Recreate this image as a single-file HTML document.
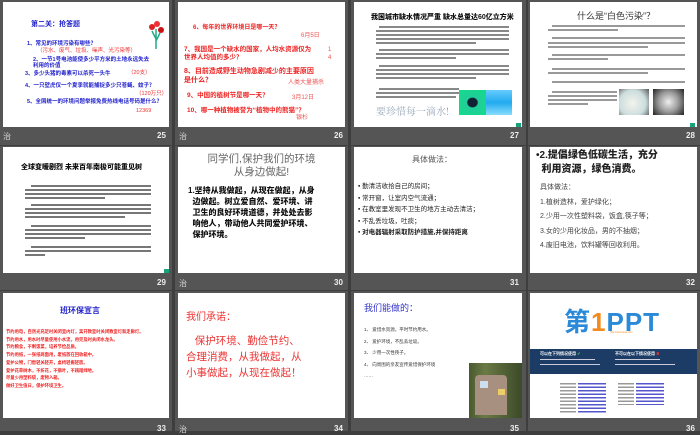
<!DOCTYPE html>
<html><head><meta charset="utf-8"><style>
*{margin:0;padding:0;box-sizing:border-box}
body{width:700px;height:431px;background:#3e3e3e;position:relative;overflow:hidden;font-family:"Liberation Sans","Noto Sans CJK SC",sans-serif}
.cell{position:absolute;background:#555}
.s{position:absolute;background:#fff;overflow:hidden}
.n{position:absolute;color:#eee;font-size:8px;font-weight:bold}
.z{position:absolute;color:#ddd;font-size:8px}
.a{position:absolute;white-space:nowrap}
.g{position:absolute;background:#1aa37a;width:5px;height:4px}
.bl{position:absolute;height:2px;background:#888}
.bd{font-family:"Liberation Sans","Noto Sans CJK SC",sans-serif;font-weight:900}
</style></head><body>
<div class="cell" style="left:0;top:0;width:172px;height:145px"></div>
<div class="cell" style="left:175px;top:0;width:173px;height:145px"></div>
<div class="cell" style="left:351px;top:0;width:175px;height:145px"></div>
<div class="cell" style="left:528px;top:0;width:172px;height:145px"></div>
<div class="cell" style="left:0;top:146px;width:172px;height:144px"></div>
<div class="cell" style="left:175px;top:146px;width:173px;height:144px"></div>
<div class="cell" style="left:351px;top:146px;width:175px;height:144px"></div>
<div class="cell" style="left:528px;top:146px;width:172px;height:144px"></div>
<div class="cell" style="left:0;top:291px;width:172px;height:140px"></div>
<div class="cell" style="left:175px;top:291px;width:173px;height:140px"></div>
<div class="cell" style="left:351px;top:291px;width:175px;height:140px"></div>
<div class="cell" style="left:528px;top:291px;width:172px;height:140px"></div>

<!-- 25 -->
<div class="s" style="left:3px;top:2px;width:166px;height:125px">
<div class="a" style="left:28px;top:17px;font-size:7px;color:#22c;font-weight:bold">第二关：抢答题</div>
<div class="a" style="left:145px;top:17px;width:14px;height:30px">
<svg width="16" height="32"><path d="M8 30 L8 10 M8 20 L4 12 M8 22 L12 14" stroke="#2a8" stroke-width="1.5" fill="none"/><circle cx="4" cy="8" r="3" fill="#d22"/><circle cx="9" cy="5" r="3" fill="#e33"/><circle cx="13" cy="11" r="3" fill="#c11"/></svg></div>
<div class="a" style="left:24px;top:37px;font-size:5.5px;color:#22c;font-weight:bold">1、常见的环境污染有哪些？</div>
<div class="a" style="left:34px;top:44px;font-size:5.5px;color:#e33">（污水、废气、垃圾、噪声、光污染等）</div>
<div class="a" style="left:30px;top:55px;font-size:5.5px;color:#22c;font-weight:bold;line-height:6px">2、一节1号电池能使多少平方米的土地永远失去<br>利用的价值</div>
<div class="a" style="left:22px;top:67px;font-size:5.5px;color:#22c;font-weight:bold">3、多少头猪的毒素可以杀死一头牛</div>
<div class="a" style="left:125px;top:66px;font-size:5.5px;color:#e33">（20支）</div>
<div class="a" style="left:22px;top:79px;font-size:5.5px;color:#22c;font-weight:bold">4、一只壁虎仅一个夏季就能捕捉多少只苍蝇、蚊子？</div>
<div class="a" style="left:133px;top:87px;font-size:5.5px;color:#e33">（120万只）</div>
<div class="a" style="left:24px;top:95px;font-size:5.5px;color:#22c;font-weight:bold">5、全国统一的环境问题举报免费热线电话号码是什么？</div>
<div class="a" style="left:133px;top:106px;font-size:5.5px;color:#e33">12369</div>
</div>
<div class="z" style="left:3px;top:131px">治</div><div class="n" style="left:157px;top:131px">25</div>

<!-- 26 -->
<div class="s" style="left:178px;top:2px;width:167px;height:125px">
<div class="a" style="left:15px;top:20px;font-size:6px;color:#e22;font-weight:bold">6、每年的世界环境日是哪一天？</div>
<div class="a" style="left:123px;top:28px;font-size:6px;color:#e55">6月5日</div>
<div class="a" style="left:6px;top:44px;font-size:6.5px;color:#e22;font-weight:bold;line-height:8px">7、我国是一个缺水的国家，人均水资源仅为<br>世界人均值的多少？</div>
<div class="a" style="left:150px;top:44px;font-size:6px;color:#e55;line-height:8px">1<br>4</div>
<div class="a" style="left:6px;top:65px;font-size:7px;color:#e22;font-weight:bold;line-height:9px">8、目前造成野生动物急剧减少的主要原因<br>是什么？</div>
<div class="a" style="left:110px;top:75px;font-size:6px;color:#e55">人类大量捕杀</div>
<div class="a" style="left:9px;top:87px;font-size:6.5px;color:#e22;font-weight:bold">9、中国的植树节是哪一天？</div>
<div class="a" style="left:114px;top:90px;font-size:6px;color:#e55">3月12日</div>
<div class="a" style="left:9px;top:102px;font-size:6.5px;color:#e22;font-weight:bold">10、哪一种植物被誉为“植物中的熊猫”？</div>
<div class="a" style="left:118px;top:110px;font-size:6px;color:#e55">银杉</div>
</div>
<div class="z" style="left:179px;top:131px">治</div><div class="n" style="left:334px;top:131px">26</div>

<!-- 27 -->
<div class="s" style="left:354px;top:2px;width:168px;height:125px">
<div class="a bd" style="left:17px;top:10px;font-size:7px;color:#111">我国城市缺水情况严重 缺水总量达60亿立方米</div>
<div class="bl" style="left:25px;top:24px;width:130px"></div><div class="bl" style="left:22px;top:28px;width:133px"></div><div class="bl" style="left:22px;top:32px;width:133px"></div><div class="bl" style="left:22px;top:36px;width:133px"></div><div class="bl" style="left:22px;top:40px;width:100px"></div>
<div class="bl" style="left:25px;top:47px;width:130px"></div><div class="bl" style="left:22px;top:51px;width:133px"></div><div class="bl" style="left:22px;top:55px;width:80px"></div>
<div class="bl" style="left:25px;top:63px;width:130px"></div><div class="bl" style="left:22px;top:67px;width:133px"></div><div class="bl" style="left:22px;top:71px;width:133px"></div><div class="bl" style="left:22px;top:75px;width:100px"></div>
<div class="bl" style="left:25px;top:86px;width:80px"></div><div class="bl" style="left:22px;top:90px;width:83px"></div><div class="bl" style="left:22px;top:94px;width:80px"></div>
<div style="position:absolute;left:105px;top:88px;width:27px;height:25px;background:radial-gradient(ellipse at 50% 50%,#123 0,#123 25%,#2c9 30%,#1d8 100%)"></div>
<div style="position:absolute;left:132px;top:88px;width:26px;height:25px;background:linear-gradient(#6cf,#2ae 50%,#8df)"></div>
<div class="a" style="left:22px;top:101px;font-size:10px;color:#9ab;font-family:'Noto Serif CJK SC',serif">要珍惜每一滴水!</div>
<div class="g" style="left:162px;top:121px"></div>
</div>
<div class="n" style="left:510px;top:131px">27</div>

<!-- 28 -->
<div class="s" style="left:530px;top:2px;width:167px;height:125px">
<div class="a" style="left:47px;top:7px;font-size:9px;color:#333">什么是“白色污染”？</div>
<div class="bl" style="left:22px;top:23px;width:133px;background:#999"></div><div class="bl" style="left:18px;top:27px;width:70px;background:#999"></div>
<div class="bl" style="left:22px;top:35px;width:133px;background:#999"></div><div class="bl" style="left:18px;top:40px;width:137px;background:#999"></div><div class="bl" style="left:18px;top:44px;width:100px;background:#999"></div>
<div class="bl" style="left:22px;top:52px;width:133px;background:#999"></div><div class="bl" style="left:18px;top:56px;width:60px;background:#999"></div>
<div class="bl" style="left:22px;top:66px;width:133px;background:#999"></div><div class="bl" style="left:18px;top:70px;width:100px;background:#999"></div>
<div class="bl" style="left:22px;top:79px;width:133px;background:#999"></div>
<div class="bl" style="left:22px;top:89px;width:65px;background:#999"></div><div class="bl" style="left:18px;top:93px;width:69px;background:#999"></div><div class="bl" style="left:18px;top:97px;width:69px;background:#999"></div><div class="bl" style="left:18px;top:101px;width:40px;background:#999"></div>
<div style="position:absolute;left:89px;top:87px;width:30px;height:26px;background:radial-gradient(circle at 45% 55%,#f4f4ee,#cdd 60%,#555)"></div>
<div style="position:absolute;left:123px;top:87px;width:31px;height:26px;background:radial-gradient(circle at 50% 50%,#eee,#999 50%,#222)"></div>
<div class="g" style="left:160px;top:121px"></div>
</div>
<div class="n" style="left:686px;top:131px">28</div>

<!-- 29 -->
<div class="s" style="left:3px;top:147px;width:166px;height:126px">
<div class="a bd" style="left:18px;top:15px;font-size:7px;color:#111">全球变暖剧烈 未来百年南极可能重见树</div>
<div class="bl" style="left:28px;top:38px;width:120px;background:#777"></div><div class="bl" style="left:22px;top:42px;width:126px;background:#777"></div><div class="bl" style="left:22px;top:46px;width:126px;background:#777"></div><div class="bl" style="left:22px;top:50px;width:80px;background:#777"></div>
<div class="bl" style="left:28px;top:57px;width:120px;background:#777"></div><div class="bl" style="left:22px;top:61px;width:126px;background:#777"></div><div class="bl" style="left:22px;top:65px;width:126px;background:#777"></div><div class="bl" style="left:22px;top:69px;width:100px;background:#777"></div>
<div class="bl" style="left:28px;top:78px;width:120px;background:#777"></div><div class="bl" style="left:22px;top:82px;width:126px;background:#777"></div><div class="bl" style="left:22px;top:86px;width:126px;background:#777"></div><div class="bl" style="left:22px;top:90px;width:60px;background:#777"></div>
<div class="bl" style="left:28px;top:99px;width:120px;background:#777"></div><div class="bl" style="left:22px;top:103px;width:126px;background:#777"></div><div class="bl" style="left:22px;top:107px;width:20px;background:#777"></div>
<div class="g" style="left:161px;top:122px"></div>
</div>
<div class="n" style="left:157px;top:278px">29</div>

<!-- 30 -->
<div class="s" style="left:178px;top:147px;width:167px;height:126px">
<div class="a" style="left:26px;top:6px;font-size:10.5px;color:#666;text-align:center;line-height:13px;width:115px">同学们,保护我们的环境<br>从身边做起!</div>
<div class="a bd" style="left:10px;top:38px;font-size:8px;color:#111;line-height:11px">1.坚持从我做起，从现在做起，从身<br>&nbsp;&nbsp;边做起。树立爱自然、爱环境、讲<br>&nbsp;&nbsp;卫生的良好环境道德，并处处去影<br>&nbsp;&nbsp;响他人，带动他人共同爱护环境、<br>&nbsp;&nbsp;保护环境。</div>
</div>
<div class="z" style="left:179px;top:278px">治</div><div class="n" style="left:334px;top:278px">30</div>

<!-- 31 -->
<div class="s" style="left:354px;top:147px;width:168px;height:126px">
<div class="a" style="left:58px;top:7px;font-size:8px;color:#555">具体做法：</div>
<div class="a" style="left:4px;top:34px;font-size:6.5px;color:#222;line-height:11.5px">▪ 勤清洁收拾自己的房间；<br>▪ 常开窗，让室内空气流通；<br>▪ 在教室里发现不卫生的地方主动去清洁；<br>▪ 不乱丢垃圾，吐痰；<br><b>▪ 对电器辐射采取防护措施,并保持距离</b></div>
</div>
<div class="n" style="left:510px;top:278px">31</div>

<!-- 32 -->
<div class="s" style="left:530px;top:147px;width:167px;height:126px">
<div class="a bd" style="left:6px;top:2px;font-size:10px;color:#222;line-height:14px">•2.提倡绿色低碳生活，充分<br>&nbsp;&nbsp;利用资源，绿色消费。</div>
<div class="a" style="left:10px;top:34px;font-size:7px;color:#444;line-height:14.5px">具体做法：<br>1.植树造林，爱护绿化；<br>2.少用一次性塑料袋，饭盒,筷子等；<br>3.女的少用化妆品，男的不抽烟；<br>4.废旧电池，饮料罐等回收利用。</div>
</div>
<div class="n" style="left:686px;top:278px">32</div>

<!-- 33 -->
<div class="s" style="left:3px;top:293px;width:166px;height:125px">
<div class="a" style="left:57px;top:12px;font-size:8px;color:#22c;font-weight:bold">班环保宣言</div>
<div class="a" style="left:3px;top:35px;font-size:4.3px;color:#e22;font-weight:bold;line-height:7.7px">节约用电，自然光充足时关闭室内灯，离开教室时关闭教室灯和走廊灯。<br>节约用水，用水时尽量使用小水流，用完及时关闭水龙头。<br>节约粮食，不剩饭菜，培养节俭品质。<br>节约用纸，一张纸两面用，废纸放在回收箱中。<br>爱护公物，门窗轻关轻开，桌椅轻搬轻放。<br>爱护花草树木，不折花，不摘叶，不践踏绿地。<br>尽量少用塑料袋，废物入箱。<br>做好卫生值日，保护环境卫生。</div>
</div>
<div class="n" style="left:157px;top:424px">33</div>

<!-- 34 -->
<div class="s" style="left:178px;top:293px;width:167px;height:125px">
<div class="a" style="left:8px;top:15px;font-size:10px;color:#e33">我们承诺：</div>
<div class="a" style="left:8px;top:40px;font-size:10.5px;color:#e33;line-height:16px">&nbsp;&nbsp;&nbsp;保护环境、勤俭节约、<br>合理消费，从我做起，从<br>小事做起，从现在做起！</div>
</div>
<div class="z" style="left:179px;top:424px">治</div><div class="n" style="left:334px;top:424px">34</div>

<!-- 35 -->
<div class="s" style="left:354px;top:293px;width:168px;height:125px">
<div class="a" style="left:10px;top:8px;font-size:9px;color:#33c">我们能做的：</div>
<div class="a" style="left:10px;top:31px;font-size:4.5px;color:#333;line-height:11.5px">1、 爱惜水资源，平时节约用水。<br>2、 爱护环境，不乱丢垃圾。<br>3、 少用一次性筷子。<br>4、 向周围的亲友宣传爱惜保护环境<br>……</div>
<div style="position:absolute;left:115px;top:70px;width:53px;height:55px;background:linear-gradient(90deg,#4a5a30,#6b7a45 30%,#3b4a28)"></div>
<div style="position:absolute;left:121px;top:82px;width:32px;height:40px;background:#a89080;border-radius:4px 4px 0 0"></div>
<div style="position:absolute;left:126px;top:88px;width:8px;height:7px;background:#cde"></div>
<div style="position:absolute;left:144px;top:96px;width:7px;height:6px;background:#ec6"></div>
</div>
<div class="n" style="left:510px;top:424px">35</div>

<!-- 36 -->
<div class="s" style="left:530px;top:293px;width:167px;height:125px">
<div class="a" style="left:34px;top:15px;font-size:26px;font-weight:bold;color:#2a8ad8;letter-spacing:1px;line-height:28px">第<span style="color:#f28a1e">1</span>PPT</div>
<div class="a" style="left:80px;top:38px;font-size:2.5px;color:#f28a1e">http://www.1ppt.com</div>
<div style="position:absolute;left:0;top:56px;width:167px;height:25px;background:#1c3c66"></div>
<div class="a" style="left:10px;top:58px;font-size:4px;color:#fff;font-weight:bold">可以在下列情况使用 <span style="color:#4c4">✔</span></div>
<div class="a" style="left:85px;top:58px;font-size:4px;color:#fff;font-weight:bold">不可以在以下情况使用 <span style="color:#e33">✖</span></div>
<div class="bl" style="left:10px;top:66px;width:55px;height:1px;background:#ccd"></div><div class="bl" style="left:10px;top:71px;width:60px;height:1px;background:#ccd"></div>
<div class="bl" style="left:85px;top:66px;width:45px;height:1px;background:#ccd"></div><div class="bl" style="left:85px;top:71px;width:60px;height:1px;background:#ccd"></div>
<div style="position:absolute;left:30px;top:90px;width:16px;height:30px;background:repeating-linear-gradient(#999 0 1.5px,#fff 1.5px 3.5px)"></div>
<div style="position:absolute;left:48px;top:90px;width:28px;height:30px;background:repeating-linear-gradient(#55c 0 1.5px,#fff 1.5px 3.5px)"></div>
<div style="position:absolute;left:88px;top:90px;width:16px;height:22px;background:repeating-linear-gradient(#999 0 1.5px,#fff 1.5px 3.5px)"></div>
<div style="position:absolute;left:106px;top:90px;width:28px;height:22px;background:repeating-linear-gradient(#55c 0 1.5px,#fff 1.5px 3.5px)"></div>
</div>
<div class="n" style="left:686px;top:424px">36</div>
</body></html>
